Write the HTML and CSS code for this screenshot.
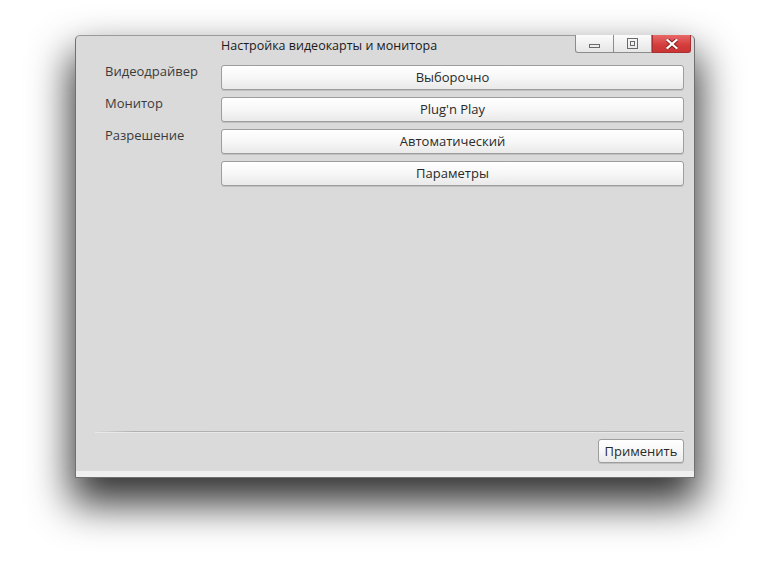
FILE: index.html
```html
<!DOCTYPE html>
<html lang="ru">
<head>
<meta charset="utf-8">
<title>Настройка видеокарты и монитора</title>
<link rel="stylesheet" href="styles.css">
</head>
<body>
<div class="desktop">
  <div class="window">
    <div class="titlebar">
      <div class="title">Настройка видеокарты и монитора</div>
      <div class="controls">
        <div class="ctl ctl-min"><svg width="12" height="6" viewBox="0 0 12 6"><rect x="0.5" y="1.5" width="10" height="3" fill="none" stroke="#6a6a6a"/></svg></div>
        <div class="ctl ctl-max"><svg width="12" height="12" viewBox="0 0 12 12"><rect x="0.5" y="0.5" width="10" height="10" fill="none" stroke="#6a6a6a"/><rect x="3.5" y="3.5" width="4" height="4" fill="none" stroke="#6a6a6a"/></svg></div>
        <div class="ctl ctl-close"><svg width="12" height="10" viewBox="0 0 12 10"><path d="M1.5 1 L10.5 9 M10.5 1 L1.5 9" stroke="#7a1a1a" stroke-width="4" stroke-linecap="square"/><path d="M1.5 1 L10.5 9 M10.5 1 L1.5 9" stroke="#ffffff" stroke-width="2.2" stroke-linecap="square"/></svg></div>
      </div>
    </div>
    <div class="content">
      <div class="label">Видеодрайвер</div>
      <button class="btn">Выборочно</button>
      <div class="label">Монитор</div>
      <button class="btn">Plug'n Play</button>
      <div class="label">Разрешение</div>
      <button class="btn">Автоматический</button>
      <div class="label"></div>
      <button class="btn">Параметры</button>
    </div>
    <div class="footer">
      <div class="separator"></div>
      <div class="actions"><button class="btn btn-apply">Применить</button></div>
    </div>
    <div class="strip"></div>
  </div>
</div>
</body>
</html>
```

FILE: styles.css
```css
html, body {
  margin: 0;
  padding: 0;
  background: #ffffff;
}
body {
  font-family: "Open Sans", "Noto Sans", "DejaVu Sans", sans-serif;
  min-height: 563px;
}
.desktop {
  padding: 35px 0 0 75px;
  min-height: 528px;
}
.window {
  width: 620px;
  height: 443px;
  box-sizing: border-box;
  border: 1px solid #707070;
  border-top-color: #9a9a9a;
  border-radius: 5px 5px 0 0;
  background: #dadada;
  display: flex;
  flex-direction: column;
  box-shadow: 0 22px 40px 4px rgba(0, 0, 0, 0.8);
}
.titlebar {
  height: 17px;
  display: flex;
  align-items: flex-start;
}
.title {
  flex: 1;
  padding-left: 145px;
  padding-top: 2px;
  font-size: 12.5px;
  line-height: 16px;
  color: #1a1a1a;
}
.controls {
  display: flex;
  margin-right: 3px;
  margin-top: -1px;
}
.ctl {
  width: 37px;
  height: 18px;
  box-sizing: border-box;
  border: 1px solid #8c8c8c;
  border-top: none;
  background: linear-gradient(#fbfbfb, #e6e6e6);
  display: flex;
  align-items: center;
  justify-content: center;
}
.ctl-min {
  border-radius: 0 0 0 3px;
  width: 39px;
}
.ctl-min svg {
  margin-top: 5px;
}
.ctl-max {
  border-left: none;
  width: 38px;
}
.ctl-close {
  border: 1px solid #a83030;
  border-top: none;
  border-radius: 0 0 3px 0;
  width: 39px;
  background: linear-gradient(#e86868, #d43c3c 60%, #c93434);
}
.content {
  flex: 1;
  display: grid;
  grid-template-columns: 116px 1fr;
  grid-auto-rows: 25px;
  row-gap: 7px;
  align-content: start;
  padding: 12px 10px 0 29px;
}
.label {
  font-size: 13px;
  line-height: 13px;
  color: #3a3a3a;
}
.btn {
  font-family: inherit;
  font-size: 13px;
  color: #2a2a2a;
  height: 25px;
  margin: 0;
  padding: 0 0 1px;
  box-sizing: border-box;
  border: 1px solid #9e9e9e;
  border-radius: 3px;
  background: linear-gradient(#ffffff, #f7f7f7 50%, #e9e9e9);
  box-shadow: 0 1px 0 rgba(0, 0, 0, 0.12);
}
.footer {
  padding: 0 10px 8px 19px;
}
.separator {
  height: 1px;
  background: linear-gradient(to right, rgba(170,170,170,0), #b0b0b0 40px, #b4b4b4);
  box-shadow: 0 1px 0 #e8e8e8;
  margin-bottom: 7px;
}
.actions {
  display: flex;
  justify-content: flex-end;
}
.btn-apply {
  width: 86px;
  height: 24px;
  font-size: 13px;
}
.strip {
  height: 6px;
  background: #efefef;
}
```
